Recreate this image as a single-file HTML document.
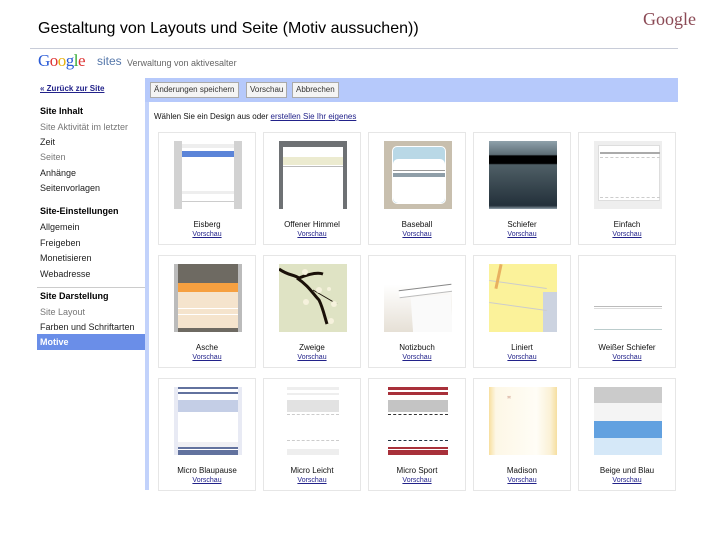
<!DOCTYPE html>
<html><head><meta charset="utf-8"><style>
*{margin:0;padding:0;box-sizing:border-box}
body{width:720px;height:540px;background:#fff;position:relative;overflow:hidden;font-family:"Liberation Sans",sans-serif}
.a{position:absolute}
.side div{position:absolute;left:40px;font-size:9px;color:#222;white-space:nowrap}
.side .b{font-weight:bold;color:#000}
.side .g{color:#777}
.card{position:absolute;width:98px;height:113px;border:1px solid #e6e6e6;background:#fff}
.th{position:absolute;left:15px;top:8px;width:68px;height:68px;overflow:hidden}
.lb{position:absolute;left:0;right:0;top:87px;text-align:center;font-size:8px;color:#111;white-space:nowrap}
.lk{position:absolute;left:0;right:0;top:98px;text-align:center;font-size:7px;color:#22228a;text-decoration:underline}
.btn{position:absolute;top:82px;height:16px;background:#f4f4f4;border:1px solid #aaa;font-size:8px;color:#333;padding:2px 3px;white-space:nowrap}
</style></head><body>
<div class="a" style="left:38px;top:20px;font-size:16px;color:#000">Gestaltung von Layouts und Seite (Motiv aussuchen))</div>
<div class="a" style="left:643px;top:9px;font-family:'Liberation Serif',serif;font-size:18px;color:#8b4a55">Google</div>
<div class="a" style="left:30px;top:48px;width:648px;height:1px;background:#c8ccd8"></div>
<div class="a" style="left:38px;top:51px;font-family:'Liberation Serif',serif;font-size:17px;letter-spacing:-0.5px"><span style="color:#2a5bd7">G</span><span style="color:#d33">o</span><span style="color:#e8b00e">o</span><span style="color:#2a5bd7">g</span><span style="color:#3a3">l</span><span style="color:#d33">e</span></div>
<div class="a" style="left:97px;top:54px;font-size:12px;color:#5577aa">sites</div>
<div class="a" style="left:127px;top:58px;font-size:9px;color:#666">Verwaltung von aktivesalter</div>
<div class="side">
<div style="top:84px;color:#22228a;text-decoration:underline;font-weight:bold;font-size:8px">« Zurück zur Site</div>
<div class="b" style="top:106px">Site Inhalt</div>
<div class="g" style="top:122px">Site Aktivität im letzter</div>
<div style="top:137px">Zeit</div>
<div class="g" style="top:152px">Seiten</div>
<div style="top:168px">Anhänge</div>
<div style="top:183px">Seitenvorlagen</div>
<div class="b" style="top:206px">Site-Einstellungen</div>
<div style="top:222px">Allgemein</div>
<div style="top:238px">Freigeben</div>
<div style="top:253px">Monetisieren</div>
<div style="top:269px">Webadresse</div>
<div class="b" style="top:291px">Site Darstellung</div>
<div class="g" style="top:307px">Site Layout</div>
<div style="top:322px">Farben und Schriftarten</div>
</div>
<div class="a" style="left:37px;top:287px;width:108px;height:1px;background:#ccc"></div>
<div class="a" style="left:37px;top:334px;width:109px;height:16px;background:#6a8ee8;color:#fff;font-size:9px;font-weight:bold;padding:3px 0 0 3px">Motive</div>
<div class="a" style="left:145px;top:78px;width:4px;height:412px;background:#c2d2fb"></div>
<div class="a" style="left:145px;top:78px;width:533px;height:24px;background:#b6c9fb"></div>
<div class="btn" style="left:150px">Änderungen speichern</div>
<div class="btn" style="left:246px">Vorschau</div>
<div class="btn" style="left:292px">Abbrechen</div>
<div class="a" style="left:154px;top:112px;font-size:8px;color:#111">Wählen Sie ein Design aus oder <span style="color:#22228a;text-decoration:underline">erstellen Sie Ihr eigenes</span></div>

<!-- row1 -->
<div class="card" style="left:158px;top:132px"><div class="th" style="background:#fff;border-left:8px solid #d2d2d2;border-right:8px solid #d2d2d2"><div class="a" style="left:0;right:0;top:3px;height:4px;background:#eee"></div><div class="a" style="left:0;right:0;top:10px;height:6px;background:#5b84d8"></div><div class="a" style="left:0;right:0;top:50px;height:3px;background:#eee"></div><div class="a" style="left:0;right:0;top:60px;height:1px;background:#ccc"></div></div><div class="lb">Eisberg</div><div class="lk">Vorschau</div></div>
<div class="card" style="left:263px;top:132px"><div class="th" style="background:#6e7174"><div class="a" style="left:4px;right:4px;top:6px;bottom:0;background:#fff"></div><div class="a" style="left:4px;right:4px;top:16px;height:8px;background:#ecebd0"></div><div class="a" style="left:4px;right:4px;top:25px;height:1px;background:#bbb"></div></div><div class="lb">Offener Himmel</div><div class="lk">Vorschau</div></div>
<div class="card" style="left:368px;top:132px"><div class="th" style="background:#c8bfae"><div class="a" style="left:8px;right:6px;top:5px;bottom:5px;background:#b9d8e6;border-radius:5px;border:1px solid #fff"></div><div class="a" style="left:9px;right:7px;top:18px;bottom:6px;background:#fff;border-radius:5px"></div><div class="a" style="left:9px;right:7px;top:29px;height:1px;background:#999"></div><div class="a" style="left:9px;right:7px;top:32px;height:4px;background:#8f9ea8"></div></div><div class="lb">Baseball</div><div class="lk">Vorschau</div></div>
<div class="card" style="left:473px;top:132px"><div class="th" style="background:linear-gradient(#8fa1ab,#5e6e76 20%,#000 22%,#000 33%,#4f5f66 35%,#23303a 95%,#8f9ea8)"></div><div class="lb">Schiefer</div><div class="lk">Vorschau</div></div>
<div class="card" style="left:578px;top:132px"><div class="th" style="background:#eee"><div class="a" style="left:4px;right:2px;top:4px;bottom:8px;background:#fff;border:1px solid #ddd"></div><div class="a" style="left:6px;right:2px;top:11px;height:2px;background:#aaa"></div><div class="a" style="left:6px;right:2px;top:16px;border-top:1px dashed #ccc"></div><div class="a" style="left:6px;right:2px;top:56px;border-top:1px dashed #ccc"></div></div><div class="lb">Einfach</div><div class="lk">Vorschau</div></div>
<!-- row2 -->
<div class="card" style="left:158px;top:255px"><div class="th" style="background:#f5e4cd;border-left:4px solid #bbb;border-right:4px solid #bbb"><div class="a" style="left:0;right:0;top:0;height:19px;background:#6e6a62"></div><div class="a" style="left:0;right:0;top:19px;height:9px;background:#f6a040"></div><div class="a" style="left:0;right:0;top:44px;height:1px;background:#fff"></div><div class="a" style="left:0;right:0;top:50px;height:1px;background:#fff"></div><div class="a" style="left:0;right:0;bottom:0;height:4px;background:#6e6a62"></div></div><div class="lb">Asche</div><div class="lk">Vorschau</div></div>
<div class="card" style="left:263px;top:255px"><div class="th" style="background:#dfe3c4"><svg width="68" height="68"><path d="M0 5 C10 12 14 10 20 14 C30 10 38 8 44 10 M18 14 C30 22 34 30 40 36 C44 44 46 54 48 60" stroke="#1a1008" stroke-width="3" fill="none"/><path d="M34 26 L58 40" stroke="#1a1008" stroke-width="1" fill="none"/><g fill="#f6f2dd"><circle cx="26" cy="8" r="3"/><circle cx="40" cy="26" r="3"/><circle cx="55" cy="40" r="3"/><circle cx="52" cy="57" r="3"/><circle cx="27" cy="38" r="3"/><circle cx="50" cy="25" r="2"/></g></svg></div><div class="lb">Zweige</div><div class="lk">Vorschau</div></div>
<div class="card" style="left:368px;top:255px"><div class="th" style="background:linear-gradient(#fff 30%,#e6e0d6)"><div class="a" style="left:15px;right:0;top:23px;height:8px;border-top:1px solid #888;border-bottom:1px solid #bbb;transform:rotate(-7deg);background:#fff"></div><div class="a" style="left:28px;right:0;top:32px;bottom:-4px;background:#fafafa;transform:rotate(-4deg)"></div></div><div class="lb">Notizbuch</div><div class="lk">Vorschau</div></div>
<div class="card" style="left:473px;top:255px"><div class="th" style="background:#fbf29a"><div class="a" style="right:0;top:28px;width:14px;height:40px;background:#ccd3e0"></div><div class="a" style="left:0;right:10px;top:20px;height:1px;background:#ccc;transform:rotate(8deg)"></div><div class="a" style="left:0;right:10px;top:42px;height:1px;background:#ccc;transform:rotate(8deg)"></div><div class="a" style="left:8px;top:0;width:3px;height:25px;background:#e8b060;transform:rotate(12deg)"></div></div><div class="lb">Liniert</div><div class="lk">Vorschau</div></div>
<div class="card" style="left:578px;top:255px"><div class="th" style="background:#fff"><div class="a" style="left:0;right:0;top:42px;height:1px;background:#bbb"></div><div class="a" style="left:0;right:0;top:44px;height:1px;background:#ddd"></div><div class="a" style="left:0;right:0;top:65px;height:1px;background:#bcc"></div></div><div class="lb">Weißer Schiefer</div><div class="lk">Vorschau</div></div>
<!-- row3 -->
<div class="card" style="left:158px;top:378px"><div class="th" style="background:#fff;border-left:4px solid #e8eaf4;border-right:4px solid #e8eaf4"><div class="a" style="left:0;right:0;top:0;height:2px;background:#62729e"></div><div class="a" style="left:0;right:0;top:5px;height:2px;background:#62729e"></div><div class="a" style="left:0;right:0;top:13px;height:12px;background:#c4cee6"></div><div class="a" style="left:0;right:0;top:55px;height:5px;background:#f0f0f4"></div><div class="a" style="left:0;right:0;top:60px;height:2px;background:#62729e"></div><div class="a" style="left:0;right:0;top:63px;height:5px;background:#62729e"></div></div><div class="lb">Micro Blaupause</div><div class="lk">Vorschau</div></div>
<div class="card" style="left:263px;top:378px"><div class="th" style="background:#fff"><div class="a" style="left:8px;right:8px;top:0;height:3px;background:#eee"></div><div class="a" style="left:8px;right:8px;top:6px;height:2px;background:#eee"></div><div class="a" style="left:8px;right:8px;top:13px;height:12px;background:#e2e2e2"></div><div class="a" style="left:8px;right:8px;top:27px;border-top:1px dashed #ccc"></div><div class="a" style="left:8px;right:8px;top:53px;border-top:1px dashed #ccc"></div><div class="a" style="left:8px;right:8px;top:62px;height:6px;background:#eee"></div></div><div class="lb">Micro Leicht</div><div class="lk">Vorschau</div></div>
<div class="card" style="left:368px;top:378px"><div class="th" style="background:#fff"><div class="a" style="left:4px;right:4px;top:0;height:3px;background:#a8303a"></div><div class="a" style="left:4px;right:4px;top:5px;height:3px;background:#a8303a"></div><div class="a" style="left:4px;right:4px;top:13px;height:12px;background:#c4c4c4"></div><div class="a" style="left:4px;right:4px;top:27px;border-top:1px dashed #333"></div><div class="a" style="left:4px;right:4px;top:53px;border-top:1px dashed #234"></div><div class="a" style="left:4px;right:4px;top:60px;height:2px;background:#a8303a"></div><div class="a" style="left:4px;right:4px;top:63px;height:5px;background:#a8303a"></div></div><div class="lb">Micro Sport</div><div class="lk">Vorschau</div></div>
<div class="card" style="left:473px;top:378px"><div class="th" style="background:linear-gradient(90deg,#f8df9e,#fdf7e6 10%,#fffdf6 70%,#fbf1d6 90%,#f6dfa0)"><div class="a" style="left:18px;top:8px;font-size:7px;color:#c98">ꟸ</div></div><div class="lb">Madison</div><div class="lk">Vorschau</div></div>
<div class="card" style="left:578px;top:378px"><div class="th" style="background:#d5e8f8"><div class="a" style="left:0;right:0;top:0;height:16px;background:#cbcbcb"></div><div class="a" style="left:0;right:0;top:16px;height:18px;background:#f4f4f4"></div><div class="a" style="left:0;right:0;top:34px;height:17px;background:#62a1e0"></div></div><div class="lb">Beige und Blau</div><div class="lk">Vorschau</div></div>
</body></html>
